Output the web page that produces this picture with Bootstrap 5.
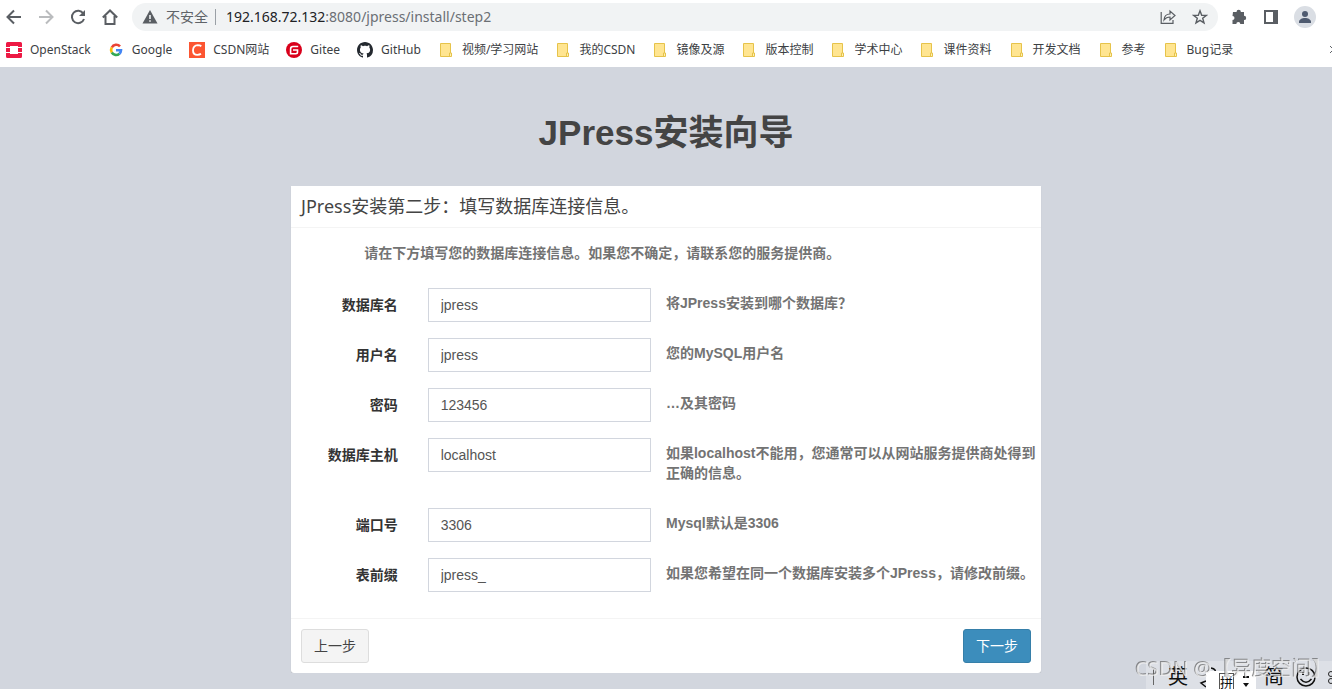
<!DOCTYPE html>
<html lang="zh-CN">
<head>
<meta charset="utf-8">
<meta name="viewport" content="width=device-width, initial-scale=1">
<title>JPress安装向导</title>
<link href="https://cdn.jsdelivr.net/npm/bootstrap@5.3.0/dist/css/bootstrap.min.css" rel="stylesheet">
<style>
  body { background: #d2d6de; color: #333; font: 14px/20px "Liberation Sans", "Noto Sans CJK SC", sans-serif; overflow-x: hidden; }
  .browser { background: #fff; height: 67px; font-family: "Noto Sans", "Noto Sans CJK SC", sans-serif; color: #3c4043; overflow: hidden; }
  .browser svg { flex: none; display: block; }
  .toolbar { height: 34px; padding: 0 16px 0 6px; }
  .tool { border: 0; background: none; padding: 0; }
  .omnibox { background: #f1f3f4; border-radius: 14px; height: 28px; padding: 0 10px; margin: 0 12px 0 14px; color: #5f6368; font-size: 14px; }
  .omnibox .divider { width: 1px; height: 16px; background: #9aa0a6; margin: 0 10px 0 7px; }
  .omnibox .address { color: #6b6f74; }
  .omnibox .host { color: #202124; }
  .bookmarks { height: 31px; padding-left: 6px; gap: 17px; font-size: 12px; line-height: 16px; }
  .bookmarks a { color: #3c4043; gap: 8px; }
  .avatar { border-radius: 50%; width: 22px; height: 22px; background: #dadee4; }
  .wizard { max-width: 750px; padding-top: 46px; }
  .wizard h1 { font-size: 35px; line-height: 40px; font-weight: 700; color: #444; margin-bottom: 33px; }
  .box { background: #fff; border-radius: 0 0 3px 3px; box-shadow: 0 1px 1px rgba(0,0,0,.15); }
  .box-title { border-bottom: 1px solid #f4f4f4; padding: 10px; margin: 0; font: 400 18px/21px "Noto Sans", "Noto Sans CJK SC", sans-serif; color: #444; }
  .box-content { padding: 10px; }
  .box-content .row { --bs-gutter-x: 30px; margin-bottom: 15px; }
  .box-content label { font-weight: 700; padding-top: 7px; }
  .hint { color: #737373; font-weight: 700; margin: 5px 0 10px; }
  .box .form-control { border: 1px solid #d2d6de; border-radius: 0; height: 34px; padding: 6px 12px; font-size: 14px; line-height: 20px; color: #555; }
  .box-actions { border-top: 1px solid #f4f4f4; padding: 10px; }
  .box .btn { font-size: 14px; line-height: 20px; padding: 6px 12px; border-radius: 3px; }
  .btn-back { background: #f4f4f4; border-color: #ddd; color: #444; }
  .btn-next { background: #3c8dbc; border-color: #367fa9; color: #fff; }
  .ime { right: 0; bottom: 0; width: 186px; height: 28px; background: #dde0e6; color: #111; font: 20px/26px "Noto Sans CJK SC", sans-serif; overflow: hidden; }
  .ime svg { display: block; }
  .ime .mode { left: 60px; bottom: 0; width: 50px; height: 18px; background: #fff; font-size: 13px; line-height: 18px; padding-left: 13px; }
  .ime .mode span { border: 1px solid #555; border-bottom: 0; height: 16px; line-height: 16px; }
  .watermark { right: 0; bottom: 7px; font: 20px/26px "Noto Sans", "Noto Sans CJK SC", sans-serif; color: rgba(240,240,240,.75); text-shadow: -1px -1px 0 rgba(90,90,90,.65); white-space: nowrap; z-index: 1031; }
</style>
</head>
<body>
<svg class="d-none">
  <symbol id="folder" viewBox="0 0 16 16"><path d="M2.500 1.500h10v10h1v3h-11z" fill="#ffe591" stroke="#e6c34a"/><path d="M11.500 14v-3h2v3" fill="#fff0b3" stroke="#e6c34a"/></symbol>
</svg>

<header class="browser">
  <div class="toolbar d-flex align-items-center">
    <div class="d-flex gap-3">
      <button class="tool" aria-label="后退"><svg width="16" height="16" viewBox="0 0 16 16" fill="none" stroke="#5a5e63" stroke-width="2"><path d="M15 8H2M8 1.500 1.500 8 8 14.500"/></svg></button>
      <button class="tool" aria-label="前进"><svg width="16" height="16" viewBox="0 0 16 16" fill="none" stroke="#babcbe" stroke-width="2"><path d="M1 8h13M8 1.500 14.500 8 8 14.500"/></svg></button>
      <button class="tool" aria-label="刷新"><svg width="16" height="16" viewBox="0 0 16 16" fill="none" stroke="#5a5e63" stroke-width="2"><path d="M13.300 4.500A6.200 6.200 0 1 0 14 10"/><path d="M15 1v6H9z" fill="#5a5e63" stroke="none"/></svg></button>
      <button class="tool" aria-label="主页"><svg width="16" height="16" viewBox="0 0 16 16" fill="none" stroke="#5a5e63" stroke-width="2"><path d="M.8 8.500 8 1.500l7.200 7M3.500 7v8h9V7"/></svg></button>
    </div>
    <div class="omnibox d-flex align-items-center flex-grow-1">
      <svg width="16" height="16" viewBox="0 0 16 16"><path d="M8 1 15.500 14.500H.5z" fill="#5a5e63"/><path d="M8 6v4M8 11.200v1.600" stroke="#f1f3f4" stroke-width="1.600"/></svg>
      <span class="ms-2 text-nowrap">不安全</span><span class="divider"></span>
      <span class="address flex-grow-1"><span class="host">192.168.72.132</span>:8080/jpress/install/step2</span>
      <button class="tool me-3" aria-label="分享"><svg width="16" height="16" viewBox="0 0 16 16" fill="none" stroke="#5a5e63" stroke-width="1.200"><path d="M1.200 3v11.300H13V11"/><path d="M4 11c.3-4 2.500-6 6-6V2l5 4.500-5 4.500V8C7.500 8 5.500 9 4 11z"/></svg></button>
      <button class="tool" aria-label="收藏"><svg width="16" height="16" viewBox="0 0 16 16" fill="none" stroke="#5a5e63" stroke-width="1.400"><path d="m8 1.800 1.700 4.400 4.700.2-3.700 2.900 1.300 4.600L8 11.300l-4 2.600 1.300-4.600L1.600 6.400l4.700-.2z"/></svg></button>
    </div>
    <div class="d-flex align-items-center gap-3">
      <button class="tool" aria-label="扩展程序"><svg width="18" height="16" viewBox="0 0 18 16"><path d="M3 3h3.500a2.200 2.200 0 0 1 4.400 0H14v3.700a2.200 2.200 0 0 1 0 4.400V15h-3.700a2 2 0 0 0-4 0H2.500v-4a2 2 0 0 0 0-4z" fill="#5a5e63"/></svg></button>
      <button class="tool" aria-label="侧边栏"><svg width="14" height="16" viewBox="0 0 14 16"><path d="M0 1h14v14H0zM2 3v10h7V3z" fill="#5a5e63" fill-rule="evenodd"/></svg></button>
      <button class="tool avatar" aria-label="个人资料"><svg width="22" height="22" viewBox="0 0 22 22" fill="#4f5b70"><circle cx="11" cy="8" r="3"/><path d="M5 17v-1c0-2.500 3-4 6-4s6 1.500 6 4v1z"/></svg></button>
    </div>
  </div>
  <nav class="bookmarks d-flex align-items-center text-nowrap" aria-label="书签">
    <a href="#" class="d-flex text-decoration-none"><svg width="16" height="16" viewBox="0 0 16 16"><path d="M0 5V1.500Q0 0 1.500 0h13Q16 0 16 1.500V5h-4V4H4v1zM0 6h4v4H0zM12 6h4v4h-4zM0 11h4v1h8v-1h4v3.500q0 1.500-1.500 1.500h-13Q0 16 0 14.500z" fill="#ed1944"/></svg>OpenStack</a>
    <a href="#" class="d-flex text-decoration-none"><svg width="16" height="16" viewBox="0 0 16 16" fill="none" stroke-width="2.600"><path d="M12 4.400A5 5 0 0 0 3.800 5.500" stroke="#ea4335"/><path d="M3.800 5.500a5 5 0 0 0 0 5" stroke="#fbbc05"/><path d="M3.800 10.500a5 5 0 0 0 7.600 1.200" stroke="#34a853"/><path d="M11.400 11.700A5 5 0 0 0 13 8.200H8" stroke="#4285f4"/></svg>Google</a>
    <a href="#" class="d-flex text-decoration-none"><svg width="16" height="16" viewBox="0 0 16 16"><path d="M0 0h16v16H0z" fill="#fc5531"/><path d="M12.300 4.300Q11 3.200 8.800 3.200 4.200 3.500 4 8.200q0 4.600 4.300 4.600 2.300 0 3.700-1" fill="none" stroke="#fff" stroke-width="1.800"/></svg>CSDN网站</a>
    <a href="#" class="d-flex text-decoration-none"><svg width="16" height="16" viewBox="0 0 16 16"><circle cx="8" cy="8" r="8" fill="#d9001b"/><path d="M12.200 4.500H7Q4.600 4.500 4.600 7v4.700h5.200q1.700 0 1.700-1.700V8H7" fill="none" stroke="#fff" stroke-width="1.600"/></svg>Gitee</a>
    <a href="#" class="d-flex text-decoration-none"><svg width="16" height="16" viewBox="0 0 16 16"><path fill="#24292f" d="M8 0C3.580 0 0 3.580 0 8c0 3.540 2.290 6.530 5.470 7.590.4.070.55-.17.55-.38 0-.19-.01-.82-.01-1.490-2.010.37-2.530-.49-2.690-.94-.09-.23-.48-.94-.82-1.130-.28-.15-.68-.52-.01-.53.63-.01 1.080.58 1.230.82.72 1.210 1.870.87 2.330.66.070-.52.28-.87.51-1.070-1.780-.2-3.640-.89-3.640-3.950 0-.87.31-1.590.82-2.150-.08-.2-.36-1.020.08-2.120 0 0 .67-.21 2.200.82.64-.18 1.320-.27 2-.27s1.360.09 2 .27c1.530-1.040 2.200-.82 2.200-.82.44 1.100.16 1.920.08 2.120.51.56.82 1.270.82 2.150 0 3.070-1.870 3.750-3.650 3.950.29.25.54.73.54 1.480 0 1.070-.01 1.930-.01 2.200 0 .21.15.46.55.38A8.010 8.010 0 0 0 16 8c0-4.420-3.580-8-8-8z"/></svg>GitHub</a>
    <a href="#" class="d-flex text-decoration-none"><svg width="16" height="16"><use href="#folder"/></svg>视频/学习网站</a>
    <a href="#" class="d-flex text-decoration-none"><svg width="16" height="16"><use href="#folder"/></svg>我的CSDN</a>
    <a href="#" class="d-flex text-decoration-none"><svg width="16" height="16"><use href="#folder"/></svg>镜像及源</a>
    <a href="#" class="d-flex text-decoration-none"><svg width="16" height="16"><use href="#folder"/></svg>版本控制</a>
    <a href="#" class="d-flex text-decoration-none"><svg width="16" height="16"><use href="#folder"/></svg>学术中心</a>
    <a href="#" class="d-flex text-decoration-none"><svg width="16" height="16"><use href="#folder"/></svg>课件资料</a>
    <a href="#" class="d-flex text-decoration-none"><svg width="16" height="16"><use href="#folder"/></svg>开发文档</a>
    <a href="#" class="d-flex text-decoration-none"><svg width="16" height="16"><use href="#folder"/></svg>参考</a>
    <a href="#" class="d-flex text-decoration-none"><svg width="16" height="16"><use href="#folder"/></svg>Bug记录</a>
    <svg class="ms-auto" width="2" height="16" viewBox="0 0 2 16" fill="none" stroke="#5f6368"><path d="m0 4 3 3M0 11l3-3"/></svg>
  </nav>
</header>

<main class="wizard mx-auto">
  <h1 class="text-center">JPress安装向导</h1>
  <form class="box">
    <h2 class="box-title">JPress安装第二步：填写数据库连接信息。</h2>
    <div class="box-content">
      <div class="row"><div class="col-11 offset-1"><p class="hint">请在下方填写您的数据库连接信息。如果您不确定，请联系您的服务提供商。</p></div></div>
      <div class="row">
        <label class="col-2 text-end" for="dbName">数据库名</label>
        <div class="col-4"><input class="form-control" id="dbName" value="jpress"></div>
        <div class="col-6 px-0"><p class="hint">将JPress安装到哪个数据库？</p></div>
      </div>
      <div class="row">
        <label class="col-2 text-end" for="dbUser">用户名</label>
        <div class="col-4"><input class="form-control" id="dbUser" value="jpress"></div>
        <div class="col-6 px-0"><p class="hint">您的MySQL用户名</p></div>
      </div>
      <div class="row">
        <label class="col-2 text-end" for="dbPassword">密码</label>
        <div class="col-4"><input class="form-control" id="dbPassword" value="123456"></div>
        <div class="col-6 px-0"><p class="hint">…及其密码</p></div>
      </div>
      <div class="row">
        <label class="col-2 text-end text-nowrap" for="dbHost">数据库主机</label>
        <div class="col-4"><input class="form-control" id="dbHost" value="localhost"></div>
        <div class="col-6 px-0"><p class="hint">如果localhost不能用，您通常可以从网站服务提供商处得到正确的信息。</p></div>
      </div>
      <div class="row">
        <label class="col-2 text-end" for="dbPort">端口号</label>
        <div class="col-4"><input class="form-control" id="dbPort" value="3306"></div>
        <div class="col-6 px-0"><p class="hint">Mysql默认是3306</p></div>
      </div>
      <div class="row">
        <label class="col-2 text-end" for="dbPrefix">表前缀</label>
        <div class="col-4"><input class="form-control" id="dbPrefix" value="jpress_"></div>
        <div class="col-6 px-0"><p class="hint">如果您希望在同一个数据库安装多个JPress，请修改前缀。</p></div>
      </div>
    </div>
    <div class="box-actions d-flex justify-content-between">
      <button type="button" class="btn btn-back">上一步</button>
      <button type="button" class="btn btn-next">下一步</button>
    </div>
  </form>
</main>

<div class="ime position-fixed d-flex align-items-end">
  <svg width="22" height="28" viewBox="0 0 22 28"><path d="M7.500 8v16" stroke="#666"/></svg>
  <span>英</span>
  <svg width="68" height="28" viewBox="0 0 68 28" fill="none" stroke="#111" stroke-width="1.500"><path d="M23 7q6 1 4 6M18 20l-5 2 5 4"/></svg>
  <div class="mode position-absolute d-flex align-items-end">
    <span>拼</span>
    <svg class="ms-auto" width="18" height="18" viewBox="0 0 18 18"><path d="M5 5h6v2H5zM5 12h6l-3 4z" fill="#111"/></svg>
  </div>
  <span class="ms-1 ps-1">简</span>
  <svg class="ms-2" width="24" height="28" viewBox="0 0 24 28" fill="none" stroke="#111" stroke-width="1.500"><circle cx="14" cy="16" r="9"/><path d="M8.500 18q5.500 6.500 11 0"/><path d="M11 11v3M17 11v3" stroke-width="2"/></svg>
  <svg class="ms-auto" width="4" height="28" viewBox="0 0 4 28" fill="none" stroke="#222"><circle cx="3" cy="13" r="2.500"/><circle cx="3" cy="20" r="2.500"/></svg>
</div>
<div class="watermark position-fixed">CSDN @【异度空间】</div>
<script src="https://cdn.jsdelivr.net/npm/bootstrap@5.3.0/dist/js/bootstrap.bundle.min.js"></script>
</body>
</html>
